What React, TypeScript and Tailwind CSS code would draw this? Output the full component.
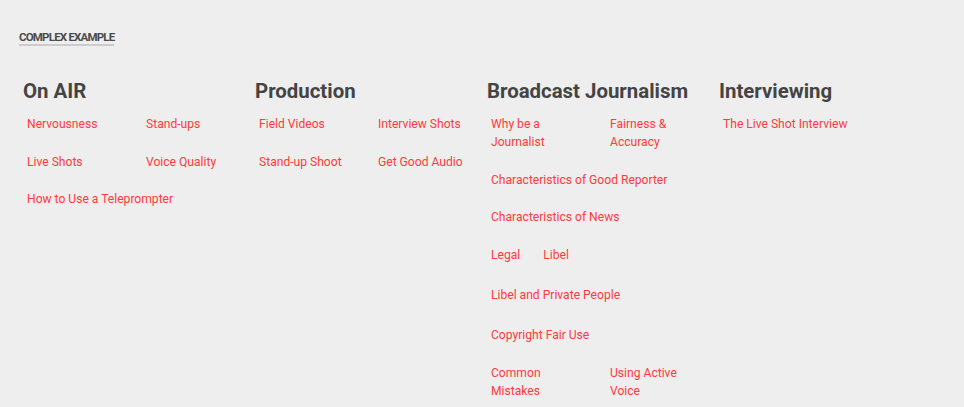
import type { ReactNode } from "react";

type Item = { label: string; full?: boolean; extra?: string };

const columns: { title: string; rows: (Item | Item[])[] }[] = [
  {
    title: "On AIR",
    rows: [
      { label: "Nervousness" },
      { label: "Stand-ups" },
      { label: "Live Shots" },
      { label: "Voice Quality" },
      { label: "How to Use a Teleprompter", full: true },
    ],
  },
  {
    title: "Production",
    rows: [
      { label: "Field Videos" },
      { label: "Interview Shots" },
      { label: "Stand-up Shoot" },
      { label: "Get Good Audio" },
    ],
  },
  {
    title: "Broadcast Journalism",
    rows: [
      { label: "Why be a Journalist" },
      { label: "Fairness & Accuracy" },
      { label: "Characteristics of Good Reporter", full: true },
      { label: "Characteristics of News", full: true },
      [{ label: "Legal" }, { label: "Libel" }],
      { label: "Libel and Private People", full: true, extra: "mt-[3px]" },
      { label: "Copyright Fair Use", full: true, extra: "mt-[2px]" },
      { label: "Common Mistakes", extra: "mt-[1px]" },
      { label: "Using Active Voice", extra: "mt-[1px]" },
    ],
  },
  {
    title: "Interviewing",
    rows: [{ label: "The Live Shot Interview", full: true }],
  },
];

const Link = ({ children }: { children: ReactNode }) => (
  <a href="#" className="text-[#ff3b3b] hover:underline">
    {children}
  </a>
);

export default function App() {
  return (
    <div
      className="min-h-screen bg-[#eeeeee] pt-[31px] pl-[19px]"
      style={{ fontFamily: "Roboto, 'Liberation Sans', sans-serif" }}
    >
      <h3 className="w-fit border-b-2 border-[#cccccc] text-[11.5px] font-bold uppercase leading-[13px] tracking-[-0.8px] text-[#4a4a4a]">
        Complex Example
      </h3>

      <div className="mt-[33px] ml-[4px] grid grid-cols-[232px_232px_232px_232px]">
        {columns.map((col) => (
          <div key={col.title}>
            <h2 className="text-[20.4px] font-bold leading-[24px] text-[#444444]">
              {col.title}
            </h2>
            <ul className="mt-[12px] grid grid-cols-[119px_119px] text-[12.1px] leading-[18px]">
              {col.rows.map((row, i) =>
                Array.isArray(row) ? (
                  <li key={i} className="col-span-2 mb-[19.5px] flex gap-[23px] pl-1">
                    {row.map((r) => (
                      <Link key={r.label}>{r.label}</Link>
                    ))}
                  </li>
                ) : (
                  <li
                    key={i}
                    className={
                      (row.full ? "col-span-2 " : "pr-[28px] ") +
                      "mb-[19.5px] pl-1 " +
                      (row.extra ?? "")
                    }
                  >
                    <Link>{row.label}</Link>
                  </li>
                )
              )}
            </ul>
          </div>
        ))}
      </div>
    </div>
  );
}
